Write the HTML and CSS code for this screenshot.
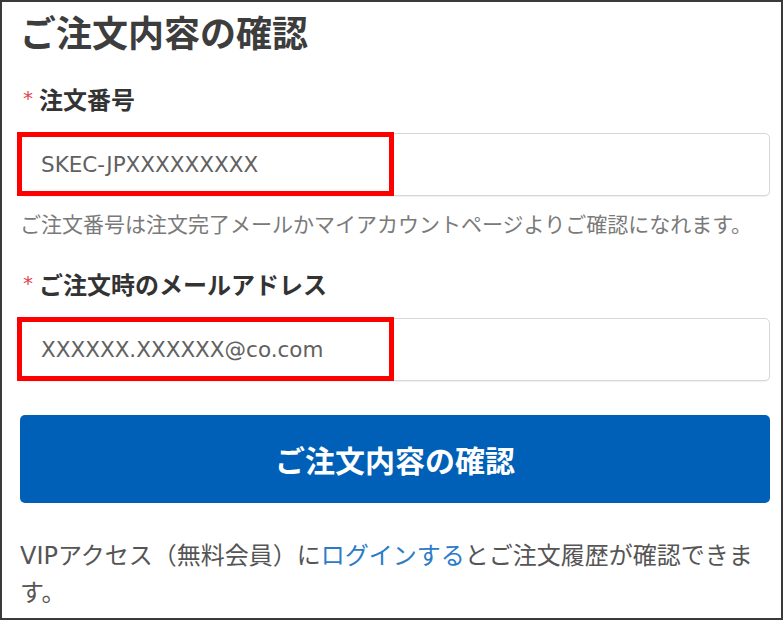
FILE: index.html
```html
<!DOCTYPE html>
<html lang="ja">
<head>
    <meta charset="UTF-8">
    <meta name="viewport" content="width=device-width, initial-scale=1.0">
    <title>ご注文内容の確認</title>
    <link rel="stylesheet" href="styles.css">
</head>
<body>
    <!-- Outer frame of the captured panel -->
    <main class="frame">
        <h1 class="page_title">ご注文内容の確認</h1>

        <form class="lookup_form" action="#" method="post">
            <!-- Order number -->
            <div class="field">
                <label class="field_label" for="order_no"><span class="req">*</span>注文番号</label>
                <div class="input_wrap">
                    <input type="text" id="order_no" class="field_input" value="SKEC-JPXXXXXXXXX">
                    <span class="mark_box"></span>
                </div>
                <p class="field_note">ご注文番号は注文完了メールかマイアカウントページよりご確認になれます。</p>
            </div>

            <!-- Mail address used for the order -->
            <div class="field field_mail">
                <label class="field_label" for="order_mail"><span class="req">*</span>ご注文時のメールアドレス</label>
                <div class="input_wrap">
                    <input type="email" id="order_mail" class="field_input" value="XXXXXX.XXXXXX@co.com">
                    <span class="mark_box"></span>
                </div>
            </div>

            <button type="submit" class="submit_btn">ご注文内容の確認</button>
        </form>

        <p class="vip_note">VIPアクセス（無料会員）に<a href="#">ログインする</a>とご注文履歴が確認できます。</p>
    </main>
</body>
</html>
```

FILE: styles.css
```css
/* Page base */
body {
    margin: 0;
    background-color: #fff;
    font-family: "DejaVu Sans", "Noto Sans CJK JP", sans-serif;
    color: #555;
}
/* Dark frame around the whole panel */
.frame {
    box-sizing: border-box;
    width: 783px;
    height: 620px;
    border: 2px solid #3a3a3a;
    padding: 11px 11px 0 18px;
    overflow: hidden;
}
/* Heading */
.page_title {
    margin: 0;
    font-size: 36px;
    line-height: 44px;
    font-weight: 700;
    color: #3d3d3d;
}
.lookup_form {
    margin: 0;
}
.field {
    margin-top: 29px;
}
.field_mail {
    margin-top: 32px;
}
/* Labels with the red required mark */
.field_label {
    display: block;
    font-size: 24px;
    line-height: 30px;
    font-weight: 700;
    color: #333;
}
.req {
    color: #e0474c;
    font-size: 20px;
    line-height: 0;
    font-weight: 400;
    margin: 0 6px 0 3px;
    vertical-align: 4px;
}
/* Text inputs */
.input_wrap {
    position: relative;
    margin-top: 17px;
}
.field_input {
    display: block;
    box-sizing: border-box;
    width: 100%;
    height: 63px;
    padding: 0 20px;
    border: 1px solid #d7d7d7;
    border-radius: 5px;
    box-shadow: 0 1px 1px rgba(0, 0, 0, 0.06);
    font-family: "DejaVu Sans", "Noto Sans CJK JP", sans-serif;
    font-size: 21.5px;
    color: #616161;
    background: #fff;
}
/* Red highlight box drawn over the left half of each input */
.mark_box {
    position: absolute;
    top: -1px;
    left: -3px;
    width: 377px;
    height: 64px;
    box-sizing: border-box;
    border: 5px solid #ff0000;
    pointer-events: none;
}
/* Hint under the order number */
.field_note {
    margin: 15px 0 0;
    font-size: 21px;
    line-height: 28px;
    color: #7a7a7a;
    white-space: nowrap;
}
/* Main blue button */
.submit_btn {
    display: block;
    width: 100%;
    height: 88px;
    margin-top: 34px;
    border: none;
    border-radius: 5px;
    background-color: #0060b8;
    color: #fff;
    font-family: "DejaVu Sans", "Noto Sans CJK JP", sans-serif;
    font-size: 30px;
    font-weight: 700;
    cursor: pointer;
}
/* Note about VIP access */
.vip_note {
    margin: 35px 0 0;
    font-size: 24px;
    line-height: 37px;
    color: #555;
}
.vip_note a {
    color: #2b7bc8;
    text-decoration: none;
}
```
